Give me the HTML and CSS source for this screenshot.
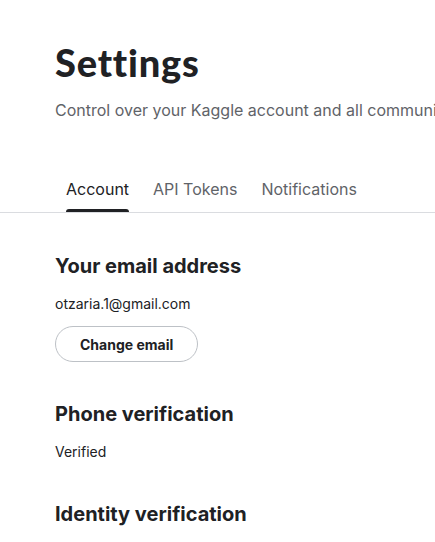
FILE: index.html
```html
<!DOCTYPE html>
<html lang="en">
<head>
<meta charset="utf-8">
<title>Settings</title>
<link rel="stylesheet" href="styles.css">
</head>
<body>
<main class="page">
  <header class="page-header">
    <h1 class="page-title">Settings</h1>
    <p class="page-subtitle">Control over your Kaggle account and all community features</p>
  </header>
  <nav class="tabs">
    <a class="tab tab-active">Account<span class="tab-indicator"></span></a>
    <a class="tab">API Tokens<span class="tab-indicator"></span></a>
    <a class="tab">Notifications<span class="tab-indicator"></span></a>
  </nav>
  <section class="content">
    <div class="section">
      <h2 class="section-title">Your email address</h2>
      <p class="section-text">otzaria.1@gmail.com</p>
      <button class="btn-outline">Change email</button>
    </div>
    <div class="section">
      <h2 class="section-title">Phone verification</h2>
      <p class="section-text">Verified</p>
    </div>
    <div class="section">
      <h2 class="section-title">Identity verification</h2>
    </div>
  </section>
</main>
</body>
</html>
```
FILE: styles.css
```css
html, body {
  margin: 0;
  padding: 0;
  background: #ffffff;
  overflow: hidden;
}
body {
  font-family: Inter, "Noto Sans", sans-serif;
  color: #202124;
}
.page {
  width: 100%;
}
.page-header {
  padding: 40px 0 0 55px;
  white-space: nowrap;
}
.page-title {
  margin: 0;
  font-family: Lato, Inter, sans-serif;
  font-size: 38px;
  line-height: 44px;
  font-weight: 900;
  letter-spacing: 0.8px;
  color: #202124;
}
.page-subtitle {
  margin: 14px 0 0;
  font-size: 16px;
  line-height: 24px;
  color: #5f6368;
}
.tabs {
  display: flex;
  gap: 24px;
  padding: 55px 0 0 66px;
  border-bottom: 1px solid #dadce0;
}
.tab {
  display: flex;
  flex-direction: column;
  font-size: 16px;
  line-height: 24px;
  color: #5f6368;
  cursor: pointer;
}
.tab-indicator {
  display: block;
  height: 3px;
  margin-top: 8px;
  border-radius: 3px 3px 0 0;
  background: transparent;
}
.tab-active {
  color: #202124;
}
.tab-active .tab-indicator {
  background: #202124;
}
.content {
  padding: 39px 0 0 55px;
}
.section + .section {
  margin-top: 38px;
}
.section-title {
  margin: 0;
  font-size: 20px;
  line-height: 28px;
  font-weight: 700;
  color: #202124;
}
.section-text {
  margin: 14px 0 0;
  font-size: 14px;
  line-height: 20px;
  color: #202124;
}
.btn-outline {
  display: block;
  margin-top: 12px;
  height: 36px;
  padding: 0 24px;
  border: 1px solid #bdc1c6;
  border-radius: 18px;
  background: #ffffff;
  font-family: Inter, "Noto Sans", sans-serif;
  font-size: 14px;
  font-weight: 700;
  color: #202124;
}
```
